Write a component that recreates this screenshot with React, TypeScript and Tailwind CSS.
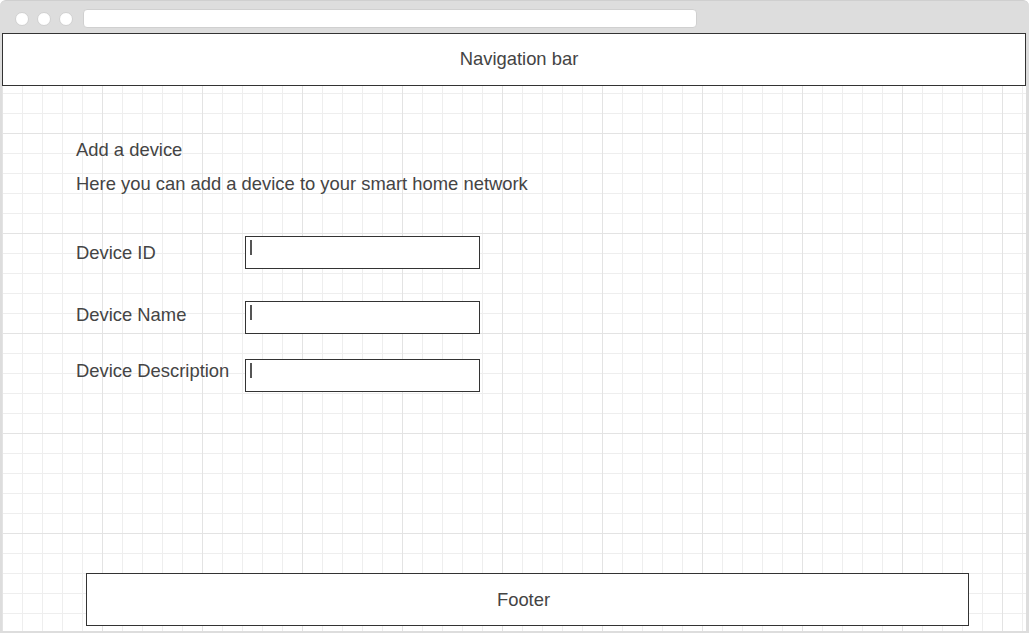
export default function App() {
  const rows = [
    { label: 'Device ID', rowMt: 'mt-[43px]', labelMt: 'mt-[8px]' },
    { label: 'Device Name', rowMt: 'mt-[32px]', labelMt: 'mt-[5px]' },
    { label: 'Device Description', rowMt: 'mt-[25px]', labelMt: 'mt-[3px]' },
  ];

  return (
    <div className="w-[1030px] h-[633px] bg-white font-['Liberation_Sans',Arial,sans-serif] text-[18.4px] text-[#444444]">
      <div className="w-[1029px] h-[633px] flex flex-col bg-[#dddddd] rounded-t-[6px] border-t border-[#cfcfcf] pl-[2px] pr-[3px] pb-[2px]">
        {/* browser top bar */}
        <div className="h-[32px] shrink-0 flex items-center">
          <div className="flex items-center gap-[8px] ml-[13px] mt-[3px]">
            <span className="w-[14px] h-[14px] rounded-full bg-white border border-[#d0d0d0]" />
            <span className="w-[14px] h-[14px] rounded-full bg-white border border-[#d0d0d0]" />
            <span className="w-[14px] h-[14px] rounded-full bg-white border border-[#d0d0d0]" />
          </div>
          <div className="ml-[10px] mt-[3px] w-[614px] h-[19px] bg-white rounded-[4px] border border-[#d0d0d0]" />
        </div>

        {/* page */}
        <div className="flex-1 flex flex-col bg-white [background-image:linear-gradient(to_right,#e3e3e3_1px,transparent_1px),linear-gradient(to_bottom,#e3e3e3_1px,transparent_1px),linear-gradient(to_right,#eeeeee_1px,transparent_1px),linear-gradient(to_bottom,#eeeeee_1px,transparent_1px)] [background-size:100px_100px,100px_100px,20px_20px,20px_20px]">
          <div className="h-[53px] shrink-0 border border-[#333333] bg-white flex items-center justify-center leading-[18px] pb-[2px]">
            <span className="ml-[10px]">Navigation bar</span>
          </div>

          <div className="pl-[74px] leading-[18px]">
            <div className="mt-[55px]">Add a device</div>
            <div className="mt-[16px]">Here you can add a device to your smart home network</div>

            {rows.map((row) => (
              <div key={row.label} className={`flex items-start ${row.rowMt}`}>
                <div className={`w-[169px] shrink-0 whitespace-nowrap ${row.labelMt}`}>{row.label}</div>
                <div className="relative w-[235px] h-[33px] border border-[#333333] bg-white">
                  <span className="absolute left-[4px] top-[3px] w-[1.5px] h-[15px] bg-[#555555]" />
                </div>
              </div>
            ))}
          </div>

          <div className="mt-auto mb-[5px] ml-[84px] w-[883px] h-[53px] border border-[#333333] bg-white flex items-center justify-center leading-[18px]">
            <span className="-ml-[8px]">Footer</span>
          </div>
        </div>
      </div>
    </div>
  );
}
